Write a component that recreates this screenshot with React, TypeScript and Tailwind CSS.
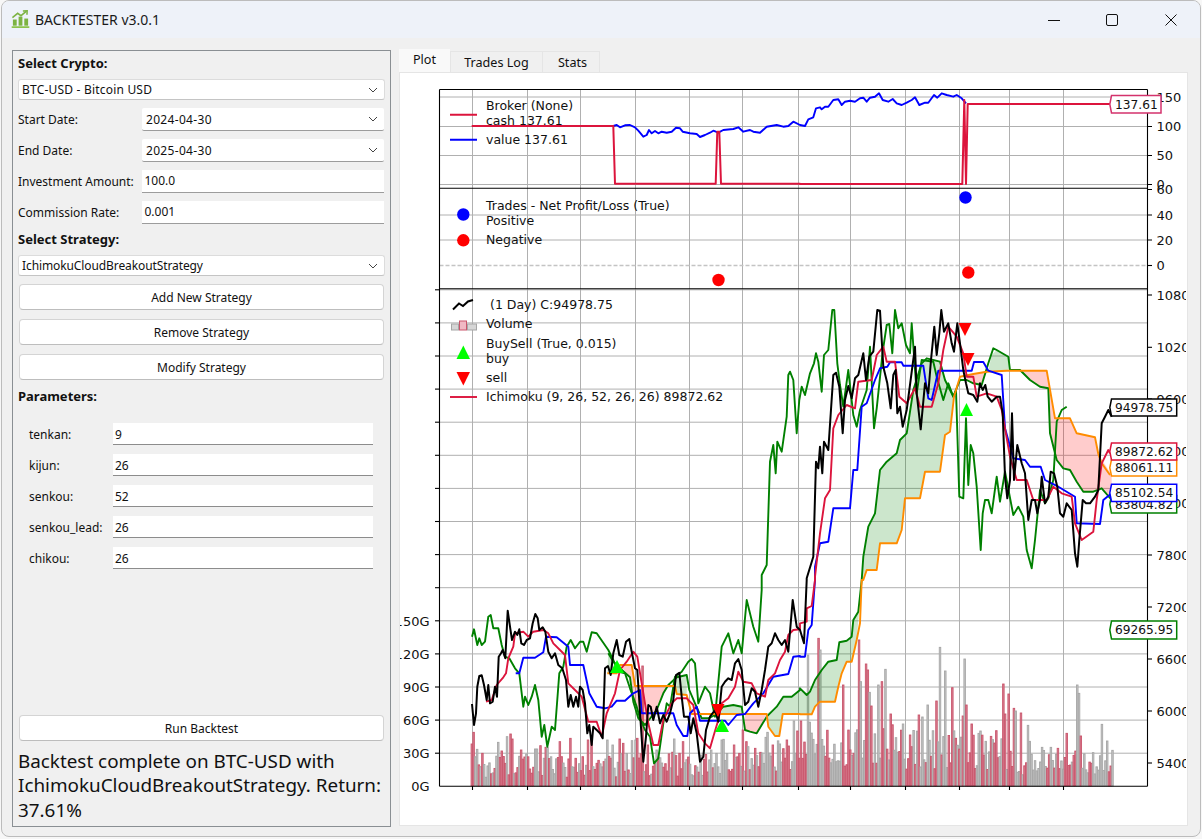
import React from "react";

const z = (x0: number, y0: number, s: string) =>
  s.trim().split(/\s+/).map((p) => {
    const [a, b] = p.split(",").map(Number);
    return `${(x0 + a / 3).toFixed(1)},${(y0 + b / 3).toFixed(1)}`;
  }).join(" ");

const blackLine = [
  z(400, 590, "216,342 222,405 228,370 232,290 238,258 245,256 252,285 260,330 265,285 270,340 278,335 285,290 291,320 296,200 303,190 308,180 316,205 323,62 330,110 336,150 345,125 352,135 358,118 364,160 372,165 380,150 390,145 398,100 406,72 413,85 418,120 428,112 436,125 445,185 455,205 465,190 475,225 487,235 498,270 505,350 512,315 520,350 528,320 535,350 540,290 548,300 555,340 562,430 568,405 575,465 580,410 590,420 600,430 608,445 615,235 624,228 632,255 640,190 650,150 658,195 668,200 678,155 688,147 695,185 705,235 712,240 722,400 730,515 738,440 745,345 752,350 760,390 770,350 780,400 790,375 800,395 810,370 820,330 828,255 838,248 845,320 852,380 865,380 872,430 880,385 890,430 900,515 910,500 918,420 930,380 945,360 955,395 965,290 975,275 985,265 995,270 1005,220 1015,207 1025,240 1035,345 1045,335 1055,295 1065,305 1075,350 1085,300 1095,240 1105,170 1115,160 1125,130 1135,150 1145,165 1155,150 1165,185 1178,30 1190,110 1200,120"),
  z(800, 580, "0,150 12,190 20,0"),
  z(800, 300, "20,835 40,770 48,485 55,505 60,440 67,520 72,425 85,450 100,225 108,218 118,260 128,400 135,300 145,258 155,295 165,235 175,225 190,160 198,240 208,170 220,155 232,30 240,32 250,200 262,250 272,325 280,225 287,210 292,340 300,320 308,380 320,330 345,140 350,280 362,388 375,250 385,280 393,180 403,80 410,165 418,100 424,30 432,95 445,70 455,130 462,155 472,70 480,130 490,210 498,250 505,280 520,285 532,305 540,250 548,270 556,255 563,290 575,305 590,290 600,290 608,340 615,530 622,595 630,540 636,340 642,540 652,435 665,490 675,520 685,660 695,600 705,600 712,640 720,600 725,530 735,610 745,590 752,515 762,520 772,560 780,640 790,650 800,610 815,630 825,760 832,800 838,720 848,600 858,610 870,610 885,590 895,570 905,370 915,350 925,330 935,350"),
].join(" ");

const redLine = [
  z(400, 590, "258,335 275,330 290,285 310,262 318,250 325,205 340,170 345,130 370,125 385,140 400,125 430,120 445,130 460,160 480,180 495,195 505,280 525,300 545,320 565,395 590,395 605,440 620,370 645,310 660,240 680,215 700,185 712,200 725,280 735,340 745,400 760,465 775,465 790,390 815,340 830,325 860,325 880,345 895,430 915,460 930,475 940,440 955,390 965,340 985,325 1005,290 1015,245 1030,275 1055,280 1070,310 1095,320 1105,270 1125,250 1140,210 1155,185 1165,135 1180,120 1200,118"),
  z(800, 580, "0,130 20,125 20,85 35,78 45,0"),
  z(800, 300, "45,830 60,700 75,595 90,570 100,385 115,345 140,315 165,325 175,245 215,240 230,165 250,140 260,185 285,185 298,290 320,310 345,265 360,320 395,320 415,250 430,150 445,80 470,110 490,160 500,230 520,230 530,290 560,280 590,290 605,330 630,470 650,540 680,540 700,600 740,600 760,560 785,580 815,590 825,670 845,720 880,695 890,600 905,490 925,450 930,460"),
].join(" ");

const blueLine = [
  z(400, 590, "347,250 358,250 370,203 405,203 430,187 438,140 470,142 505,170 510,225 550,225 568,310 590,350 615,355 635,350 650,332 675,332 700,310 720,300 725,370 820,370 830,405 850,438 862,438 870,370 890,350 900,392 975,392 985,405 1010,375 1035,372 1060,340 1090,310 1120,260 1165,252 1180,200 1200,198"),
  z(800, 580, "0,230 15,230 25,150 35,135 45,0"),
  z(800, 300, "45,800 60,730 85,725 100,625 150,625 160,510 172,510 185,320 200,310 225,240 240,205 262,200 270,187 305,187 310,197 370,197 385,295 395,300 415,212 515,212 522,186 550,186 565,212 605,225 615,385 640,475 675,480 690,500 722,500 735,540 775,560 825,590 830,670 900,672 910,600 935,580"),
].join(" ");

const chikouLine = [
  z(400, 590, "216,140 222,118 232,165 238,145 245,165 255,155 265,80 272,75 280,115 295,115 305,165 315,200 328,205 345,235 358,250 370,350 375,320 385,345 395,320 405,285 415,330 425,440 433,405 442,470 455,410 465,420 478,250 490,230 500,170 512,150 525,175 540,155 550,155 560,185 575,127 590,130 625,180 640,210 655,245 675,250 690,295 710,350 720,385 735,420 750,440 762,520 775,505 790,400 800,340 810,350 825,260 845,245 865,215 875,207 885,220 895,340 915,290 930,310 945,380 965,170 985,130 1000,190 1015,150 1025,190 1040,30 1060,110 1075,155 1085,0"),
  z(600, 300, "485,825 500,795 510,485 520,435 527,520 532,425 545,455 560,350 565,225 570,215 580,240 590,400 598,300"),
  z(800, 300, "5,260 15,285 30,220 42,190 48,160 55,185 65,275 72,165 85,150 97,30 103,30 112,190 120,255 130,320 145,210 160,345 170,380 180,330 200,270 210,140 222,385 230,325 248,155 260,75 268,72 277,160 285,30 295,85 305,70 318,135 330,160 335,70 350,280 365,180 400,185 410,230 430,300 445,250 460,290 468,270 478,590 490,595 498,355 505,555 512,435 520,460 530,560 542,750 548,640 555,600 565,600 575,640 590,530 600,605 615,515 640,645 655,620 670,650 680,750 695,805 705,720 720,570 735,610 745,595 760,540 770,365 785,330 800,320"),
].join(" ");

const senkouA = [
  z(400, 590, "625,190 640,215 660,235 690,262 700,335 715,385 735,405 770,360 790,310 805,285 830,262 860,255 868,300 885,340 905,385 925,385 945,375 970,350 1000,345 1025,350 1035,420 1050,425 1070,430 1100,380 1130,350 1150,320 1175,320 1200,300"),
  z(800, 580, "0,325 20,345 30,335 45,300 65,270 85,245 110,240 118,187 140,182 155,170 160,120 175,95 185,0"),
  z(800, 300, "190,770 205,680 225,640 240,510 260,485 290,460 300,420 320,400 340,270 365,190 380,175 420,185 435,240 460,290 480,240 500,240 520,250 545,255 565,190 580,145 590,150 625,170 630,210 660,210 690,240 720,260 745,265 750,400 770,480 790,505 810,510 830,545 850,575 880,575 905,565 935,600"),
].join(" ");

const senkouB = [
  z(400, 590, "622,250 650,250 660,225 695,225 705,288 825,288 830,312 860,315 875,372 1100,372 1105,410 1125,438 1138,438 1148,372 1200,372"),
  z(800, 580, "0,403 35,403 45,380 60,365 105,365 115,320 125,280 140,245 155,245 170,180 180,130 185,0"),
  z(800, 300, "190,840 200,810 230,810 240,730 290,730 305,690 315,595 360,595 375,515 420,515 435,405 450,395 462,290 480,230 520,222 560,215 620,212 740,212 765,355 810,355 830,400 885,412 895,462 905,490 930,525"),
].join(" ");

const greenFills = [
  z(400, 590, "625,190 640,215 640,250 622,250"),
  z(400, 590, "825,288 830,262 860,255 860,315 830,312"),
  z(400, 590, "970,350 1000,345 1025,350 1032,372 950,372"),
  z(400, 590, "1100,372 1130,350 1150,320 1175,320 1200,300 1200,372 1148,372 1138,438 1125,438 1105,410"),
  z(800, 580, "0,325 20,345 30,335 45,300 65,270 85,245 110,240 118,187 140,182 155,170 160,120 175,95 185,0 170,180 155,245 140,245 125,280 115,320 105,365 60,365 45,380 35,403 0,403"),
  z(800, 300, "185,840 190,770 205,680 225,640 240,510 260,485 290,460 300,420 320,400 340,270 365,190 380,175 420,185 435,240 460,290 450,395 435,405 420,515 375,515 360,595 315,595 305,690 290,730 240,730 230,810 200,810 190,840"),
  z(800, 300, "565,212 575,165 590,150 625,170 630,212"),
];
const redFills = [
  z(400, 590, "660,225 695,225 705,288 700,335 690,262"),
  z(400, 590, "705,288 825,288 805,285 790,310 770,360 735,405 715,385 700,335"),
  z(400, 590, "1035,372 1100,372 1070,430 1050,425 1035,420"),
  z(800, 300, "490,230 560,215 545,255 520,250 500,240"),
  z(800, 300, "660,212 740,212 765,355 810,355 830,400 885,412 895,462 935,525 935,600 905,565 880,575 850,575 830,545 810,510 790,505 770,480 750,400 745,265 720,260 690,240"),
];

const valueLine = [
  z(400, 40, "640,258 650,255 660,262 675,256 690,255 705,262 715,272 730,290 740,285 747,270 755,280 765,273 775,280 785,275 800,278 815,275 828,263 840,265 848,275 870,280 890,282 900,291 915,285 930,278 940,272 955,278 970,270 1000,267 1015,262 1030,275 1050,270 1060,275 1080,278 1100,260 1130,255 1150,260 1165,258 1180,245 1200,255"),
  z(800, 0, "0,375 15,378 25,358 40,352 48,325 60,322 65,328 75,320 85,320 100,300 115,298 125,315 135,305 150,302 165,305 180,295 190,293 200,305 210,293 225,290 237,280 248,300 265,305 278,297 290,310 305,315 320,308 335,300 345,292 358,315 375,308 385,308 402,285 412,293 425,280 440,285 460,290 470,285 485,295 498,310"),
].join(" ");
const cashLine = [
  z(400, 40, "215,258 640,258 645,431 947,431 952,275 958,275 963,431 1200,431"),
  z(800, 0, "0,552 487,552 493,300 498,552 503,312 930,312"),
].join(" ");

type Bar = { h: number; red: boolean };
const buildBars = (): Bar[] => {
  let seed = 1234;
  const rnd = () => {
    seed = (seed * 1103515245 + 12345) % 2147483648;
    return seed / 2147483648;
  };
  const env = (x: number) => (x < 620 ? 30 : x < 760 ? 34 : x < 800 ? 48 : x < 900 ? 68 : x < 1010 ? 56 : 36);
  const bars: Bar[] = [];
  for (let i = 0; i < 365; i++) {
    const x = 472 + i * 1.76;
    bars.push({ h: env(x) * (0.28 + 0.72 * rnd()), red: rnd() > 0.5 });
  }
  const put = (x: number, y: number, red: boolean) => {
    const i = Math.round((x - 472) / 1.76);
    if (i >= 0 && i < 365) bars[i] = { h: 786 - y, red };
  };
  const apply = (x0: number, y0: number, s: string) =>
    s.trim().split(/\s+/).forEach((p) => {
      const [c, a, b] = p.split(",");
      put(x0 + Number(a) / 3, y0 + Number(b) / 3, c === "r");
    });
  apply(400, 590, "r,222,427 r,216,462 g,232,478 r,250,490 g,296,457 r,305,483 g,324,440 r,330,432 r,340,447 r,365,480 g,380,492 g,405,477 g,410,477 r,420,467 r,440,472 g,445,472 r,478,455 r,485,500 r,510,445 r,530,505 r,548,500 r,564,450 r,575,445 g,625,450 g,640,465 r,658,447 r,672,460 g,695,452 r,712,445 g,708,450 r,730,228 r,745,465 g,770,480 g,825,447 r,852,455 r,838,490 g,905,495 g,935,480 g,970,448 g,965,450 r,1005,465 r,1030,420 r,1040,455 g,1045,470 r,1065,475 r,1080,487 g,1105,427 g,1100,442 r,1120,465 g,1140,462 r,1160,450 g,1180,393 r,1195,423");
  apply(800, 580, "g,25,225 r,55,175 g,62,210 r,128,315 r,176,180 g,182,305 r,198,252 r,204,270 g,208,337 r,212,378 g,235,315 r,246,305 g,255,268 r,272,402 g,310,432 r,332,465 r,355,405 g,367,411 g,382,375 r,412,363 g,420,202 g,435,273 r,456,323 r,488,408 g,495,237 r,500,375 r,515,432 g,543,453 r,590,452 r,612,312 r,618,402 r,625,342 r,642,385 g,650,393 r,664,399 g,685,436 g,692,484 g,727,502 g,755,502 r,775,505 r,802,460 g,830,315 g,838,340 r,845,468 g,907,433 g,924,483 r,930,558 g,940,511");
  return bars;
};
const bars = buildBars();

const gridX = [472.5, 527.5, 580.5, 635.5, 689.5, 742.5, 798.5, 850.5, 905.5, 959.5, 1009.5, 1063.5];
const gridY = Array.from({ length: 15 }, (_, i) => 786.3 - 33.1 * (i + 1));
const textClass = "font-['DejaVu_Sans',sans-serif] text-[12.5px] fill-[#111111]";
const tickClass = "font-['DejaVu_Sans',sans-serif] text-[13px] fill-[#111111]";
const tagClass = "font-['DejaVu_Sans',sans-serif] text-[12.2px] fill-[#111111]";

const Tag = ({ y1, y2, x2, color, text }: { y1: number; y2: number; x2: number; color: string; text: string }) => (
  <g>
    <polygon points={`1111.5,${y1} ${x2},${y1} ${x2},${y2} 1111.5,${y2} 1109.8,${(y1 + y2) / 2}`} fill="white" stroke={color} strokeWidth="1.5" />
    <text x={1115} y={(y1 + y2) / 2 + 4.4} className={tagClass}>{text}</text>
  </g>
);

const Chart = () => (
  <svg viewBox="400 73 786 752" className="block w-[786px] h-[752px]">
    <g stroke="#b0b0b0" strokeWidth="1">
      {gridX.map((x) => <line key={x} x1={x} x2={x} y1={89.5} y2={786} />)}
      {gridY.map((y) => <line key={y} x1={439.5} x2={1147.5} y1={y} y2={y} />)}
      {[97, 126.5, 155.5, 184.5, 215, 240].map((y) => <line key={y} x1={439.5} x2={1147.5} y1={y} y2={y} />)}
    </g>
    <line x1={439.5} x2={1147.5} y1={265.5} y2={265.5} stroke="#c4c4c4" strokeWidth="1.3" strokeDasharray="4 2" />

    {bars.map((b, i) => (
      <rect key={i} x={471.1 + i * 1.76} y={786 - b.h} width={1.5} height={b.h} fill={b.red ? "#d97f92" : "#c6c6c6"} stroke={b.red ? "#c9566c" : "#a6a6a6"} strokeWidth="0.9" />
    ))}

    {greenFills.map((p, i) => <polygon key={i} points={p} fill="#008000" fillOpacity="0.2" />)}
    {redFills.map((p, i) => <polygon key={i} points={p} fill="#ff0000" fillOpacity="0.2" />)}

    <g fill="none" strokeLinejoin="round" strokeWidth="1.9">
      <polyline points={chikouLine} stroke="#008000" />
      <polyline points={senkouA} stroke="#008000" />
      <polyline points={senkouB} stroke="#ff8c00" />
      <polyline points={blueLine} stroke="#0000ff" />
      <polyline points={redLine} stroke="#dc143c" />
      <polyline points={blackLine} stroke="#000000" strokeWidth="2" />
      <polyline points={valueLine} stroke="#0000ff" />
      <polyline points={cashLine} stroke="#dc143c" strokeWidth="2" />
    </g>

    <g fill="#00ff00">
      <polygon points="610,673 617,660 624,673" />
      <polygon points="715,732 722,719 729,732" />
      <polygon points="960,416 966.5,403 973,416" />
    </g>
    <g fill="#ff0000">
      <polygon points="958.5,323 971.5,323 965,336" />
      <polygon points="961.5,353 974.5,353 968,366" />
      <polygon points="711.5,704 724.5,704 718,717" />
      <circle cx={718.5} cy={280} r={6.2} />
      <circle cx={968.3} cy={272.5} r={6.2} />
      <circle cx={463.3} cy={240.3} r={6.2} />
    </g>
    <g fill="#0000ff">
      <circle cx={965.5} cy={197.5} r={6.2} />
      <circle cx={463.3} cy={214.5} r={6.2} />
    </g>

    <g stroke="#000000" strokeWidth="1.1" fill="none">
      <line x1={439.5} x2={1147.5} y1={89.5} y2={89.5} />
      <line x1={439.5} x2={1147.5} y1={188.2} y2={188.2} />
      <line x1={439.5} x2={1147.5} y1={288.7} y2={288.7} />
      <line x1={439.5} x2={1147.5} y1={786.3} y2={786.3} />
      <line x1={439.5} x2={439.5} y1={89.5} y2={786.3} />
      <line x1={1147.5} x2={1147.5} y1={89.5} y2={786.3} />
      {gridX.map((x) => <line key={x} x1={x} x2={x} y1={786} y2={790} />)}
      {gridY.map((y) => <line key={y} x1={435} x2={439.5} y1={y} y2={y} />)}
      {[97, 126.5, 155.5, 184.5, 189.5, 215, 240, 265.5, 295, 347.3, 399, 451, 503, 555, 607, 659, 711, 763].map((y) => (
        <line key={y} x1={1147.5} x2={1152} y1={y} y2={y} />
      ))}
    </g>

    {[["150", 97], ["100", 126.5], ["50", 155.5], ["0", 184.5], ["60", 189.5], ["40", 215], ["20", 240], ["0", 265.5], ["108000", 295], ["102000", 347.3], ["96000", 399], ["90000", 451], ["84000", 503], ["78000", 555], ["72000", 607], ["66000", 659], ["60000", 711], ["54000", 763]].map(([t, y], i) => (
      <text key={i} x={1156.5} y={Number(y) + 4.7} className={tickClass}>{t}</text>
    ))}
    {[["0G", 786], ["30G", 753], ["60G", 720], ["90G", 687], ["120G", 654], ["150G", 621]].map(([t, y]) => (
      <text key={t} x={429.5} y={Number(y) + 4.7} textAnchor="end" className={tickClass}>{t}</text>
    ))}

    <Tag y1={95.5} y2={113} x2={1161} color="#d4326c" text="137.61" />
    <Tag y1={399} y2={416} x2={1176.7} color="#000000" text="94978.75" />
    <Tag y1={459.5} y2={476} x2={1176.7} color="#ff8c00" text="88061.11" />
    <Tag y1={443} y2={460} x2={1176.7} color="#dc143c" text="89872.62" />
    <Tag y1={495.5} y2={513} x2={1176.7} color="#008000" text="83804.82" />
    <Tag y1={484.3} y2={501.5} x2={1176.7} color="#0000ff" text="85102.54" />
    <Tag y1={621} y2={639} x2={1176.7} color="#008000" text="69265.95" />

    <line x1={450} x2={477} y1={114.7} y2={114.7} stroke="#dc143c" strokeWidth="1.9" />
    <line x1={450} x2={477} y1={139.7} y2={139.7} stroke="#0000ff" strokeWidth="1.9" />
    <text x={486} y={110} className={textClass}>Broker (None)</text>
    <text x={486} y={125} className={textClass}>cash 137.61</text>
    <text x={486} y={144} className={textClass}>value 137.61</text>
    <text x={486} y={210} className={textClass}>Trades - Net Profit/Loss (True)</text>
    <text x={486} y={225} className={textClass}>Positive</text>
    <text x={486} y={244} className={textClass}>Negative</text>

    <polyline points="453,309.5 459,303.5 463,306 468,301.5 473,300" fill="none" stroke="#000000" strokeWidth="2" />
    <rect x={451.5} y={324} width={7} height={6} fill="#d6d6d6" stroke="#a6a6a6" />
    <rect x={459.5} y={321} width={7} height={9} fill="#f0b8c3" stroke="#c9566c" />
    <rect x={467.5} y={324} width={9} height={6} fill="#d6d6d6" stroke="#a6a6a6" />
    <polygon points="456.5,359 463.3,345.5 470,359" fill="#00ff00" />
    <polygon points="456.5,372 470,372 463.3,385.5" fill="#ff0000" />
    <line x1={450} x2={477} y1={397} y2={397} stroke="#dc143c" strokeWidth="1.9" />
    <text x={490} y={309} className={textClass}>(1 Day) C:94978.75</text>
    <text x={486} y={328} className={textClass}>Volume</text>
    <text x={486} y={348} className={textClass}>BuySell (True, 0.015)</text>
    <text x={486} y={363} className={textClass}>buy</text>
    <text x={486} y={382} className={textClass}>sell</text>
    <text x={486} y={401} className={textClass}>Ichimoku (9, 26, 52, 26, 26) 89872.62</text>
  </svg>
);

const Chevron = () => (
  <svg viewBox="0 0 10 6" className="w-[10px] h-[6px] shrink-0">
    <path d="M1 1 L5 5 L9 1" fill="none" stroke="#444444" strokeWidth="1" />
  </svg>
);

const DateCombo = ({ value }: { value: string }) => (
  <div className="flex-1 h-[23px] bg-white border-b border-[#9c9c9c] rounded-[2px] flex items-center justify-between pl-[4px] pr-[6px]">
    <span className="tracking-[0.32px] pt-[2px]">{value}</span>
    <Chevron />
  </div>
);

const Combo = ({ value, cls }: { value: string; cls: string }) => (
  <div className="h-[21px] bg-white border border-[#dcdcdc] border-b-[#c4c4c4] rounded-[3px] flex items-center justify-between pl-[3px] pr-[6px]">
    <span className={cls}>{value}</span>
    <Chevron />
  </div>
);

const Field = ({ label, value }: { label: string; value: string }) => (
  <div className="flex items-center mt-[8px] mr-[1px] h-[23px]">
    <span className="w-[124px] shrink-0">{label}</span>
    <div className="flex-1 h-[23px] bg-white border-b border-[#9c9c9c] flex items-center pl-[2.5px]">{value}</div>
  </div>
);

const Btn = ({ label, cls }: { label: string; cls: string }) => (
  <div className={`h-[26px] mx-[1px] bg-white border border-[#d4d4d4] border-b-[#bdbdbd] rounded-[4px] flex items-center justify-center pt-[2px] ${cls}`}>{label}</div>
);

const Param = ({ label, value, cls }: { label: string; value: string; cls: string }) => (
  <div className={`flex items-center h-[22px] pl-[11px] pr-[12px] ${cls}`}>
    <span className="w-[84px] shrink-0 pt-[2px]">{label}</span>
    <div className="flex-1 h-[22px] bg-white border-b border-[#8c8c8c] flex items-center pl-[2px] pt-[2px]">{value}</div>
  </div>
);

export default function App() {
  return (
    <div className="w-[1202px] h-[839px] bg-[#f7f7f7] pl-[1px] pr-[1px] pb-[2px] font-['Noto_Sans',sans-serif] text-[12px] text-[#111111] overflow-hidden">
      <div className="w-full h-full border border-[#bcbcbc] rounded-[8px] overflow-hidden bg-[#f0f0f0] flex flex-col">
        <div className="h-[37px] shrink-0 bg-[#eef2f9] flex items-center">
          <svg viewBox="0 0 20 20" className="w-[19px] h-[19px] ml-[9px]">
            <rect x="2" y="10" width="4" height="6.5" fill="#7cb342" />
            <rect x="8" y="7" width="4" height="9.5" fill="#7cb342" />
            <rect x="14" y="9" width="4" height="7.5" fill="#7cb342" />
            <rect x="0.5" y="17" width="19" height="2" rx="1" fill="#8bc34a" />
            <path d="M1.5 8 L7 3.5 L10.5 6 L16 1.5" fill="none" stroke="#7cb342" strokeWidth="1.6" />
            <path d="M12.5 1 L17 0.8 L16.8 5" fill="none" stroke="#7cb342" strokeWidth="1.6" />
          </svg>
          <span className="ml-[5px] text-[14px] text-[#1a1a1a] leading-none">BACKTESTER v3.0.1</span>
          <div className="ml-auto flex items-center">
            <svg viewBox="0 0 12 12" className="w-[12px] h-[12px] mr-[46px]"><line x1="0" x2="12" y1="6.5" y2="6.5" stroke="#111111" strokeWidth="1" /></svg>
            <svg viewBox="0 0 12 12" className="w-[12px] h-[12px] mr-[47px]"><rect x="0.5" y="0.5" width="11" height="11" rx="1.5" fill="none" stroke="#111111" strokeWidth="1" /></svg>
            <svg viewBox="0 0 12 12" className="w-[12px] h-[12px] mr-[23px]"><path d="M0.5 0.5 L11.5 11.5 M11.5 0.5 L0.5 11.5" stroke="#111111" strokeWidth="1" /></svg>
          </div>
        </div>

        <div className="flex-1 flex min-h-0">
          <div className="w-[379px] h-[777px] mt-[12px] ml-[10px] shrink-0 border border-[#8a8f93] px-[5px] flex flex-col">
            <div className="h-[24px] flex items-center font-bold text-[13px] pt-[2px]">Select Crypto:</div>
            <div className="mt-[4px]"><Combo value="BTC-USD - Bitcoin USD" cls="tracking-[0.2px]" /></div>
            <div className="flex items-center mt-[8px] mr-[1px] h-[23px]">
              <span className="w-[124px] shrink-0">Start Date:</span>
              <DateCombo value="2024-04-30" />
            </div>
            <div className="flex items-center mt-[8px] mr-[1px] h-[23px]">
              <span className="w-[124px] shrink-0">End Date:</span>
              <DateCombo value="2025-04-30" />
            </div>
            <Field label="Investment Amount:" value="100.0" />
            <Field label="Commission Rate:" value="0.001" />
            <div className="h-[23px] mt-[4px] flex items-center font-bold text-[13px]">Select Strategy:</div>
            <div className="mt-[4px]"><Combo value="IchimokuCloudBreakoutStrategy" cls="tracking-[-0.1px]" /></div>
            <Btn label="Add New Strategy" cls="mt-[8px]" />
            <Btn label="Remove Strategy" cls="mt-[9px]" />
            <Btn label="Modify Strategy" cls="mt-[9px]" />
            <div className="h-[24px] mt-[4px] flex items-center font-bold text-[13px] pt-[2px]">Parameters:</div>
            <Param label="tenkan:" value="9" cls="mt-[15px]" />
            <Param label="kijun:" value="26" cls="mt-[9px]" />
            <Param label="senkou:" value="52" cls="mt-[9px]" />
            <Param label="senkou_lead:" value="26" cls="mt-[9px]" />
            <Param label="chikou:" value="26" cls="mt-[9px]" />
            <div className="flex-1" />
            <Btn label="Run Backtest" cls="" />
            <div className="mt-[8px] mb-[4px] text-[18.85px] leading-[24.3px]">Backtest complete on BTC-USD with IchimokuCloudBreakoutStrategy. Return: 37.61%</div>
          </div>

          <div className="ml-[8px] w-[789px] mt-[11px] shrink-0 flex flex-col text-[12.6px]">
            <div className="flex items-end h-[23px]">
              <div className="w-[51px] h-[23px] bg-[#f9f9f9] flex items-center justify-center">Plot</div>
              <div className="w-[93px] h-[21px] bg-[#f0f0f0] border border-[#e5e5e5] border-b-0 flex items-center justify-center pt-[2px]">Trades Log</div>
              <div className="w-[57px] h-[21px] bg-[#f0f0f0] border border-[#e5e5e5] border-b-0 border-l-0 flex items-center justify-center pt-[2px] pl-[3px]">Stats</div>
            </div>
            <div className="h-[754px] bg-white border border-[#e5e5e5]">
              <Chart />
            </div>
          </div>
        </div>
      </div>
    </div>
  );
}
